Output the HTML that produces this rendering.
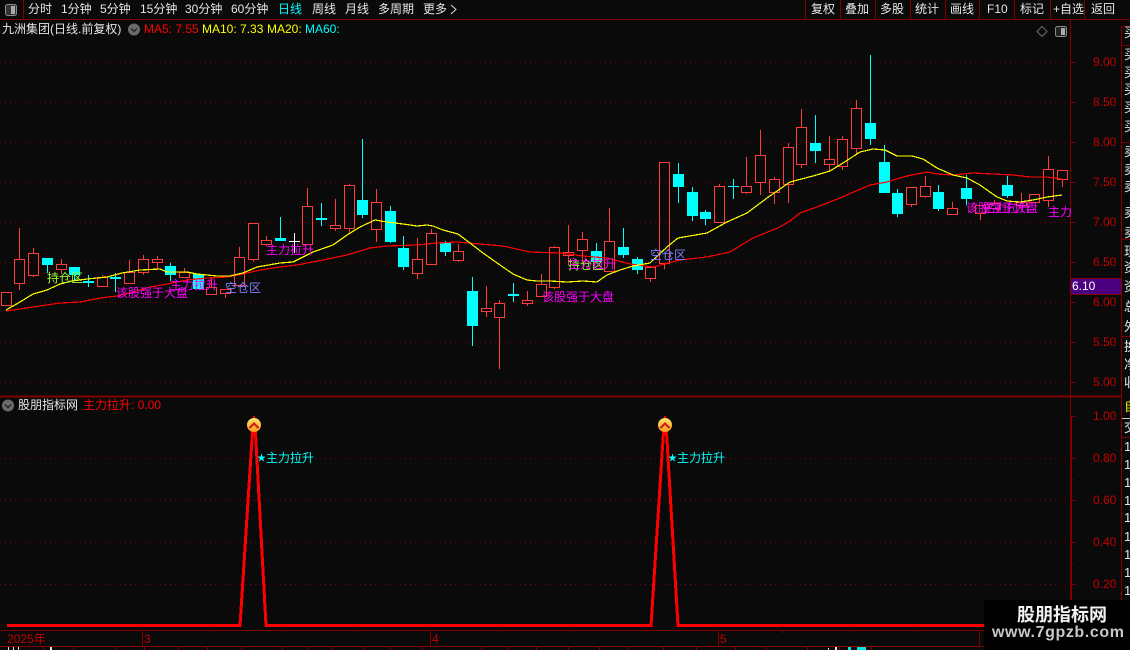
<!DOCTYPE html>
<html lang="zh-CN">
<head>
<meta charset="utf-8">
<title>九洲集团</title>
<style>
html,body{margin:0;padding:0;background:#0a0a0a;}
#r{position:relative;width:1130px;height:650px;overflow:hidden;background:#0a0a0a;font-family:"Liberation Sans","WenQuanYi Zen Hei","Noto Sans CJK SC",sans-serif;font-size:12px;color:#e6e6e6;}
#r svg.m{position:absolute;left:0;top:0;}
.t{position:absolute;line-height:14px;white-space:nowrap;}
.a{color:#c40000;}
.g{color:#99ff33;}
.p{color:#ff00ff;}
.b{color:#8080ff;}
.c{color:#00ffff;}
.y{color:#ffff00;}
.d{color:#ff0000;}
.s{position:absolute;left:1124px;width:14px;line-height:14px;font-size:13px;color:#e6e6e6;overflow:hidden;}
</style>
</head>
<body>
<div id="r">
<svg class="m" width="1130" height="650" viewBox="0 0 1130 650" xmlns="http://www.w3.org/2000/svg">
<!-- grid -->
<g stroke="#800000" stroke-width="1" stroke-dasharray="1 4" shape-rendering="crispEdges" fill="none">
<path d="M0 62.5H1066M0 102.5H1066M0 142.5H1066M0 182.5H1066M0 222.5H1066M0 262.5H1066M0 302.5H1066M0 342.5H1066M0 382.5H1066M0 458.5H1066M0 500.5H1066M0 542.5H1066M0 584.5H1066"/>
</g>
<!-- frame -->
<g stroke="#800000" fill="none" shape-rendering="crispEdges">
<path d="M0 19.5H1130M23.5 0V19M805.5 0V19M840.5 0V19M875.5 0V19M910.5 0V19M945.5 0V19M979.5 0V19M1014.5 0V19M1050.5 0V19M1084.5 0V19"/>
<path d="M1070.5 19V630"/>
<path d="M1071 416V630" stroke-width="2"/>
<path d="M1121.5 26V650M1122 26.5H1130M1122 45.5H1130M1122 142.5H1130M1122 239.5H1130M1122 336.5H1130M1122 437.5H1130"/>
<path d="M0 396.5H1121" stroke-width="2"/>
<path d="M0 630.5H1070M0 646.5H1121M142.5 630V646M430.5 630V646M718.5 630V646M979.5 630V646"/>
<path d="M214.5 630V633M286.5 630V633M358.5 630V633M502.5 630V633M574.5 630V633M646.5 630V633M783.5 630V633M849.5 630V633M914.5 630V633M1014.5 630V633"/>
<path d="M43.5 646V650M73.5 646V650M116.5 646V650M144.5 646V650M178.5 646V650M207.5 646V650M241.5 646V650M282.5 646V650M308.5 646V650M332.5 646V650M364.5 646V650M390.5 646V650M422.5 646V650M481.5 646V650M508.5 646V650M536.5 646V650M568.5 646V650M599.5 646V650M628.5 646V650M663.5 646V650M696.5 646V650M735.5 646V650M766.5 646V650M807.5 646V650M839.5 646V650M871.5 646V650"/>
<path d="M1070 62.5h6M1070 102.5h6M1070 142.5h6M1070 182.5h6M1070 222.5h6M1070 262.5h6M1070 302.5h6M1070 342.5h6M1070 382.5h6M1070 82.5h3M1070 122.5h3M1070 162.5h3M1070 202.5h3M1070 242.5h3M1070 322.5h3M1070 362.5h3M1070 416.5h6M1070 458.5h6M1070 500.5h6M1070 542.5h6M1070 584.5h6M1070 437.5h3M1070 479.5h3M1070 521.5h3M1070 563.5h3M1070 605.5h3"/>
</g>
<path d="M1122 418.5H1130" stroke="#cccccc" shape-rendering="crispEdges"/>
<!-- price tag -->
<rect x="1071" y="279" width="50" height="15" fill="#4b0082"/>
<path d="M1071 278.5H1121M1071 294.5H1121" stroke="#800000" shape-rendering="crispEdges"/>
<!-- red candles -->
<path fill="none" stroke="#ff3c3c" stroke-width="1" shape-rendering="crispEdges" d="
M1.5 292.5h10v13h-10zM6.5 305V306
M14.5 259.5h10v24h-10zM19.5 228V259M19.5 283V290
M28.5 253.5h10v22h-10zM33.5 248V253M33.5 275V277
M56.5 264.5h10v5h-10zM61.5 259V264M61.5 269V274
M97.5 277.5h10v9h-10zM102.5 275V277
M124.5 272.5h10v11h-10zM129.5 260V272
M138.5 259.5h10v13h-10zM143.5 255V259M143.5 272V275
M152.5 259.5h10v3h-10zM157.5 256V259M157.5 262V269
M179.5 272.5h10v5h-10zM184.5 268V272
M206.5 287.5h10v7h-10zM211.5 278V287
M220.5 289.5h10v4h-10zM225.5 293V298
M234.5 257.5h10v28h-10zM239.5 247V257
M248.5 223.5h10v36h-10zM253.5 259V262
M261.5 240.5h10v4h-10zM266.5 236V240M266.5 244V246
M302.5 206.5h10v38h-10zM307.5 188V206
M330.5 225.5h10v3h-10zM335.5 199V225M335.5 228V231
M344.5 185.5h10v43h-10zM349.5 184V185M349.5 228V233
M371.5 202.5h10v27h-10zM376.5 189V202M376.5 229V242
M412.5 259.5h10v14h-10zM417.5 238V259M417.5 273V279
M426.5 233.5h10v31h-10zM431.5 229V233
M453.5 251.5h10v9h-10zM458.5 244V251M458.5 260V262
M481.5 308.5h10v3h-10zM486.5 286V308M486.5 311V317
M494.5 303.5h10v14h-10zM499.5 300V303M499.5 317V369
M522.5 300.5h10v3h-10zM527.5 291V300M527.5 303V306
M536.5 284.5h10v12h-10zM541.5 274V284
M549.5 247.5h10v40h-10zM554.5 246V247M554.5 287V289
M563.5 252.5h10v3h-10zM568.5 225V252M568.5 255V265
M577.5 239.5h10v11h-10zM582.5 232V239M582.5 250V263
M604.5 241.5h10v30h-10zM609.5 208V241
M645.5 267.5h10v11h-10zM650.5 278V282
M659.5 162.5h10v101h-10zM664.5 263V269
M714.5 186.5h10v36h-10zM719.5 184V186
M741.5 186.5h10v6h-10zM746.5 157V186M746.5 192V194
M755.5 155.5h10v27h-10zM760.5 130V155M760.5 182V195
M769.5 179.5h10v13h-10zM774.5 177V179M774.5 192V204
M783.5 147.5h10v37h-10zM788.5 143V147M788.5 184V203
M796.5 127.5h10v37h-10zM801.5 109V127M801.5 164V168
M824.5 159.5h10v5h-10zM829.5 136V159M829.5 164V172
M837.5 139.5h10v27h-10zM842.5 136V139M842.5 166V170
M851.5 108.5h10v40h-10zM856.5 100V108M856.5 148V155
M906.5 187.5h10v17h-10zM911.5 204V207
M920.5 186.5h10v10h-10zM925.5 176V186M925.5 196V198
M947.5 208.5h10v6h-10zM952.5 202V208M952.5 214V215
M975.5 205.5h10v8h-10zM980.5 213V220
M989.5 203.5h10v5h-10zM994.5 200V203
M1016.5 202.5h10v3h-10zM1021.5 193V202
M1029.5 194.5h10v8h-10z
M1043.5 169.5h10v31h-10zM1048.5 156V169M1048.5 200V207
M1057.5 170.5h10v9h-10zM1062.5 179V187"/>
<!-- cyan bodies -->
<path fill="#00ffff" shape-rendering="crispEdges" d="M42 258h11v7h-11zM69 267h11v8h-11zM165 266h11v9h-11zM193 274h11v15h-11zM275 238h11v3h-11zM357 200h11v15h-11zM385 211h11v31h-11zM398 248h11v19h-11zM440 243h11v9h-11zM467 291h11v35h-11zM591 251h11v11h-11zM618 247h11v8h-11zM632 259h11v11h-11zM673 174h11v13h-11zM687 192h11v24h-11zM700 212h11v7h-11zM810 143h11v8h-11zM865 123h11v16h-11zM879 162h11v31h-11zM892 193h11v21h-11zM933 192h11v17h-11zM961 188h11v11h-11zM1002 185h11v11h-11zM83 281h11v2h-11zM110 277h11v2h-11zM316 218h11v2h-11zM508 294h11v2h-11z"/>
<path fill="none" stroke="#00ffff" shape-rendering="crispEdges" d="M47.5 265V273M74.5 275V280M170.5 263V266M170.5 275V281M280.5 217V238M362.5 139V200M362.5 215V218M390.5 206V211M390.5 242V243M403.5 236V248M403.5 267V270M445.5 241V243M445.5 252V256M472.5 277V291M472.5 326V346M596.5 243V251M623.5 228V247M623.5 255V258M637.5 257V259M637.5 270V274M678.5 163V174M678.5 187V203M692.5 187V192M692.5 216V221M705.5 210V212M705.5 219V225M815.5 115V143M815.5 151V163M870.5 55V123M870.5 139V145M884.5 145V162M897.5 189V193M897.5 214V217M938.5 185V192M938.5 209V211M966.5 175V188M966.5 199V205M1007.5 176V185M1007.5 196V198M88.5 275V287M115.5 273V292M321.5 203V226M513.5 283V302M733.5 179V199M728 186.5H739"/>
<path fill="none" stroke="#ffffff" shape-rendering="crispEdges" d="M294.5 233V253M289 241.5H300"/>
<!-- MA lines -->
<polyline fill="none" stroke="#ff0000" stroke-width="1.2" shape-rendering="crispEdges" points="6,311 33,307 60,303 80,302 100,298 117,296 133,292 150,287 167,284 187,280 207,278 227,277 243,274 260,270 280,267 297,265 323,260 347,255 370,248 387,246 417,245 437,243 457,242 480,244 503,246 530,252 560,253 583,256 607,258 630,264 653,267 680,260 707,257 730,252 753,238 780,227 790,221 800,213 817,207 840,198 870,185 887,182 907,176 927,172 937,174 953,175 973,173 1013,175 1030,177 1047,177 1062,179"/>
<polyline fill="none" stroke="#ffff00" stroke-width="1.2" shape-rendering="crispEdges" points="6,310 20,302 33,294 47,290 60,284 72,281 87,279 107,277 122,273 140,270 160,269 167,272 187,272 197,274 217,276 230,276 243,273 257,267 280,263 293,262 313,252 333,245 347,235 360,227 375,220 387,222 403,224 417,226 427,225 433,226 443,230 458,234 470,243 483,253 500,265 513,274 527,280 537,281 550,281 567,282 583,281 597,282 607,275 620,270 633,266 650,263 667,247 678,238 707,233 727,222 747,213 767,198 780,189 790,182 813,176 830,171 843,163 860,152 873,149 885,150 897,156 912,156 923,159 937,168 953,175 967,178 980,185 997,197 1007,201 1020,202 1033,200 1047,197 1062,195"/>
<!-- indicator line -->
<polyline fill="none" stroke="#ff0000" stroke-width="3" stroke-linejoin="miter" shape-rendering="crispEdges" points="7,625.5 240,625.5 253,424 255,424 266,625.5 651,625.5 664,424 666,424 678,625.5 1066,625.5"/>
<!-- arrow icons -->
<defs>
<linearGradient id="o" x1="0" y1="0" x2="0" y2="1"><stop offset="0" stop-color="#ffe56a"/><stop offset="1" stop-color="#ff9a1a"/></linearGradient>
</defs>
<path d="M254 416v3M665 416v3" stroke="#ff0000" stroke-width="2"/>
<circle cx="254" cy="425" r="7" fill="url(#o)"/>
<path d="M249.5 428L254 423.5L258.5 428" fill="none" stroke="#c8201a" stroke-width="2.2"/>
<circle cx="665" cy="425" r="7" fill="url(#o)"/>
<path d="M660.5 428L665 423.5L669.5 428" fill="none" stroke="#c8201a" stroke-width="2.2"/>
<!-- small toolbar icons -->
<rect x="5.5" y="4.5" width="11" height="11" rx="2" fill="#333" stroke="#8a8a8a"/>
<rect x="11" y="6" width="4" height="8" fill="#aaa"/>
<rect x="1055.5" y="26.5" width="11" height="10" rx="2" fill="#222" stroke="#8a8a8a"/>
<rect x="1061" y="28" width="4" height="7" fill="#aaa"/>
<path d="M1042 26.5L1047 31.5L1042 36.5L1037 31.5Z" fill="none" stroke="#6a6a6a"/>
<circle cx="134" cy="29.5" r="6" fill="#6a6a6a"/>
<path d="M131 28.5L134 31.5L137 28.5" fill="none" stroke="#222" stroke-width="1.3"/>
<circle cx="8" cy="405.5" r="6" fill="#6a6a6a"/>
<path d="M5 404.5L8 407.5L11 404.5" fill="none" stroke="#222" stroke-width="1.3"/>
<path d="M451 5L456 9.5L451 14" fill="none" stroke="#d8d8d8"/>
<!-- bottom row bits -->
<path d="M8 647h1v3h-1zM13 647h1v3h-1zM18 647h1v3h-1zM50 647h2v3h-2zM828 648h1v2h-1zM835 647h2v3h-2z" fill="#e6e6e6"/>
<path d="M848 647h3v3h-3zM857 647h9v3h-9z" fill="#00e6e6"/>
</svg>

<!-- nav -->
<div class="t" style="left:28px;top:2px">分时</div>
<div class="t" style="left:61px;top:2px">1分钟</div>
<div class="t" style="left:100px;top:2px">5分钟</div>
<div class="t" style="left:140px;top:2px">15分钟</div>
<div class="t" style="left:185px;top:2px">30分钟</div>
<div class="t" style="left:231px;top:2px">60分钟</div>
<div class="t c" style="left:278px;top:2px">日线</div>
<div class="t" style="left:312px;top:2px">周线</div>
<div class="t" style="left:345px;top:2px">月线</div>
<div class="t" style="left:378px;top:2px">多周期</div>
<div class="t" style="left:423px;top:2px">更多</div>
<div class="t" style="left:811px;top:2px">复权</div>
<div class="t" style="left:845px;top:2px">叠加</div>
<div class="t" style="left:880px;top:2px">多股</div>
<div class="t" style="left:915px;top:2px">统计</div>
<div class="t" style="left:950px;top:2px">画线</div>
<div class="t" style="left:987px;top:2px">F10</div>
<div class="t" style="left:1020px;top:2px">标记</div>
<div class="t" style="left:1053px;top:2px">+自选</div>
<div class="t" style="left:1091px;top:2px">返回</div>

<!-- header -->
<div class="t" style="left:2px;top:22px">九洲集团(日线.前复权)</div>
<div class="t d" style="left:144px;top:22px">MA5: 7.55</div>
<div class="t y" style="left:202px;top:22px">MA10: 7.33</div>
<div class="t y" style="left:267px;top:22px">MA20:</div>
<div class="t c" style="left:305px;top:22px">MA60:</div>

<!-- axis labels -->
<div class="t a" style="left:1093px;top:55px">9.00</div>
<div class="t a" style="left:1093px;top:95px">8.50</div>
<div class="t a" style="left:1093px;top:135px">8.00</div>
<div class="t a" style="left:1093px;top:175px">7.50</div>
<div class="t a" style="left:1093px;top:215px">7.00</div>
<div class="t a" style="left:1093px;top:255px">6.50</div>
<div class="t" style="left:1072px;top:279px;color:#fff">6.10</div>
<div class="t a" style="left:1093px;top:295px">6.00</div>
<div class="t a" style="left:1093px;top:335px">5.50</div>
<div class="t a" style="left:1093px;top:375px">5.00</div>
<div class="t a" style="left:1093px;top:409px">1.00</div>
<div class="t a" style="left:1093px;top:451px">0.80</div>
<div class="t a" style="left:1093px;top:493px">0.60</div>
<div class="t a" style="left:1093px;top:535px">0.40</div>
<div class="t a" style="left:1093px;top:577px">0.20</div>

<!-- chart labels -->
<div class="t g" style="left:47px;top:271px">持仓区</div>
<div class="t p" style="left:116px;top:286px">该股强于大盘</div>
<div class="t p" style="left:170px;top:278px">主力拉升</div>
<div class="t b" style="left:225px;top:281px">空仓区</div>
<div class="t p" style="left:266px;top:243px">主力拉升</div>
<div class="t g" style="left:568px;top:258px">持仓区</div>
<div class="t p" style="left:568px;top:257px">主力拉升</div>
<div class="t p" style="left:542px;top:290px">该股强于大盘</div>
<div class="t b" style="left:650px;top:248px">空仓区</div>
<div class="t p" style="left:966px;top:201px">该股强于大盘</div>
<div class="t p" style="left:983px;top:201px">主力拉升</div>
<div class="t p" style="left:1048px;top:205px">主力</div>

<!-- lower pane -->
<div class="t" style="left:18px;top:398px">股朋指标网</div>
<div class="t d" style="left:83px;top:398px">主力拉升: 0.00</div>
<div class="t c" style="left:257px;top:451px;font-size:9px">★</div>
<div class="t c" style="left:266px;top:451px">主力拉升</div>
<div class="t c" style="left:668px;top:451px;font-size:9px">★</div>
<div class="t c" style="left:677px;top:451px">主力拉升</div>

<!-- time axis -->
<div class="t a" style="left:7px;top:632px">2025年</div>
<div class="t a" style="left:144px;top:632px">3</div>
<div class="t a" style="left:432px;top:632px">4</div>
<div class="t a" style="left:720px;top:632px">5</div>

<!-- right column -->
<div class="s" style="top:26px">买</div>
<div class="s" style="top:48px">买</div>
<div class="s" style="top:66px">买</div>
<div class="s" style="top:83px">买</div>
<div class="s" style="top:101px">买</div>
<div class="s" style="top:120px">买</div>
<div class="s" style="top:145px">卖</div>
<div class="s" style="top:163px">卖</div>
<div class="s" style="top:180px">卖</div>
<div class="s" style="top:206px">卖</div>
<div class="s" style="top:226px">卖</div>
<div class="s" style="top:245px">现</div>
<div class="s" style="top:261px">资</div>
<div class="s" style="top:280px">资</div>
<div class="s" style="top:300px">总</div>
<div class="s" style="top:320px">外</div>
<div class="s" style="top:340px">换</div>
<div class="s" style="top:358px">净</div>
<div class="s" style="top:376px">收</div>
<div class="s" style="top:400px;color:#e6e600">自</div>
<div class="s" style="top:421px">交</div>
<div class="s" style="top:440px">1</div>
<div class="s" style="top:458px">1</div>
<div class="s" style="top:476px">1</div>
<div class="s" style="top:494px">1</div>
<div class="s" style="top:511px">1</div>
<div class="s" style="top:530px">1</div>
<div class="s" style="top:548px">1</div>
<div class="s" style="top:566px">1</div>
<div class="s" style="top:584px">1</div>

<!-- watermark -->
<div style="position:absolute;left:984px;top:600px;width:146px;height:50px;background:#000"></div>
<div class="t" style="left:1017px;top:604px;line-height:20px;font-size:18px;font-weight:bold;color:#f2f2f2;font-family:'Noto Sans CJK SC','WenQuanYi Zen Hei',sans-serif">股朋指标网</div>
<div class="t" style="left:992px;top:624px;line-height:18px;font-size:16px;letter-spacing:0.6px;font-weight:bold;color:#c8c8c8">www.7gpzb.com</div>
</div>
</body>
</html>
